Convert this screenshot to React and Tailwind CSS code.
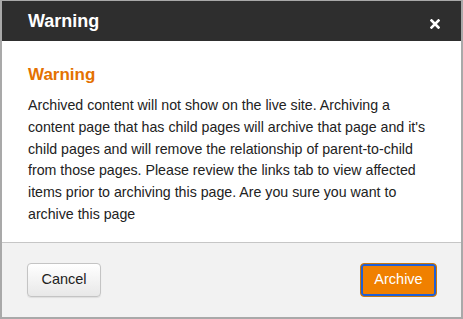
import React from 'react';

const ArchiveWarningDialog = () => {
  return (
    <div className="w-[463px] h-[319px] bg-white border-t border-x-2 border-b-2 border-[#a9a9a9] flex flex-col font-['Liberation_Sans',Arial,sans-serif]">
      {/* Header */}
      <div className="h-10 shrink-0 bg-[#2e2e2e] flex items-center justify-between pl-[26px] pr-[20px]">
        <h1 className="text-[18px] font-bold text-white leading-none">Warning</h1>
        <button className="w-3 h-3 flex items-center justify-center mt-[5px]" aria-label="Close">
          <svg width="10" height="10" viewBox="0 0 10 10">
            <path d="M1.5 1.5 L8.5 8.5 M8.5 1.5 L1.5 8.5" stroke="#ffffff" strokeWidth="2.6" strokeLinecap="square" />
          </svg>
        </button>
      </div>

      {/* Body */}
      <div className="pt-6 pb-4 pl-[26px] pr-[32px]">
        <h2 className="text-[17px] leading-5 font-bold text-[#e47100]">Warning</h2>
        <p className="mt-[10px] text-[14.2px] leading-[21.8px] text-[#222222]">
          Archived content will not show on the live site. Archiving a content page that has child pages will archive that page and it's child pages and will remove the relationship of parent-to-child from those pages. Please review the links tab to view affected items prior to archiving this page. Are you sure you want to archive this page
        </p>
      </div>

      {/* Footer */}
      <div className="flex-1 bg-[#f2f2f2] border-t border-[#c6c6c6] flex items-start justify-between pt-5 pl-[25px] pr-[24px]">
        <button className="h-[34px] w-[74px] rounded-[4px] border border-[#c4c4c4] bg-gradient-to-b from-white to-[#e8e8e8] text-[14.5px] text-[#222222] shadow-[0_1px_1px_rgba(0,0,0,0.08)]">
          Cancel
        </button>
        <button className="h-[34px] w-[77px] rounded-[4px] border border-[#c8790f] bg-[#f08000] text-[14.5px] text-white shadow-[inset_0_0_0_2px_#1f5fd6]">
          Archive
        </button>
      </div>
    </div>
  );
};

export default ArchiveWarningDialog;
